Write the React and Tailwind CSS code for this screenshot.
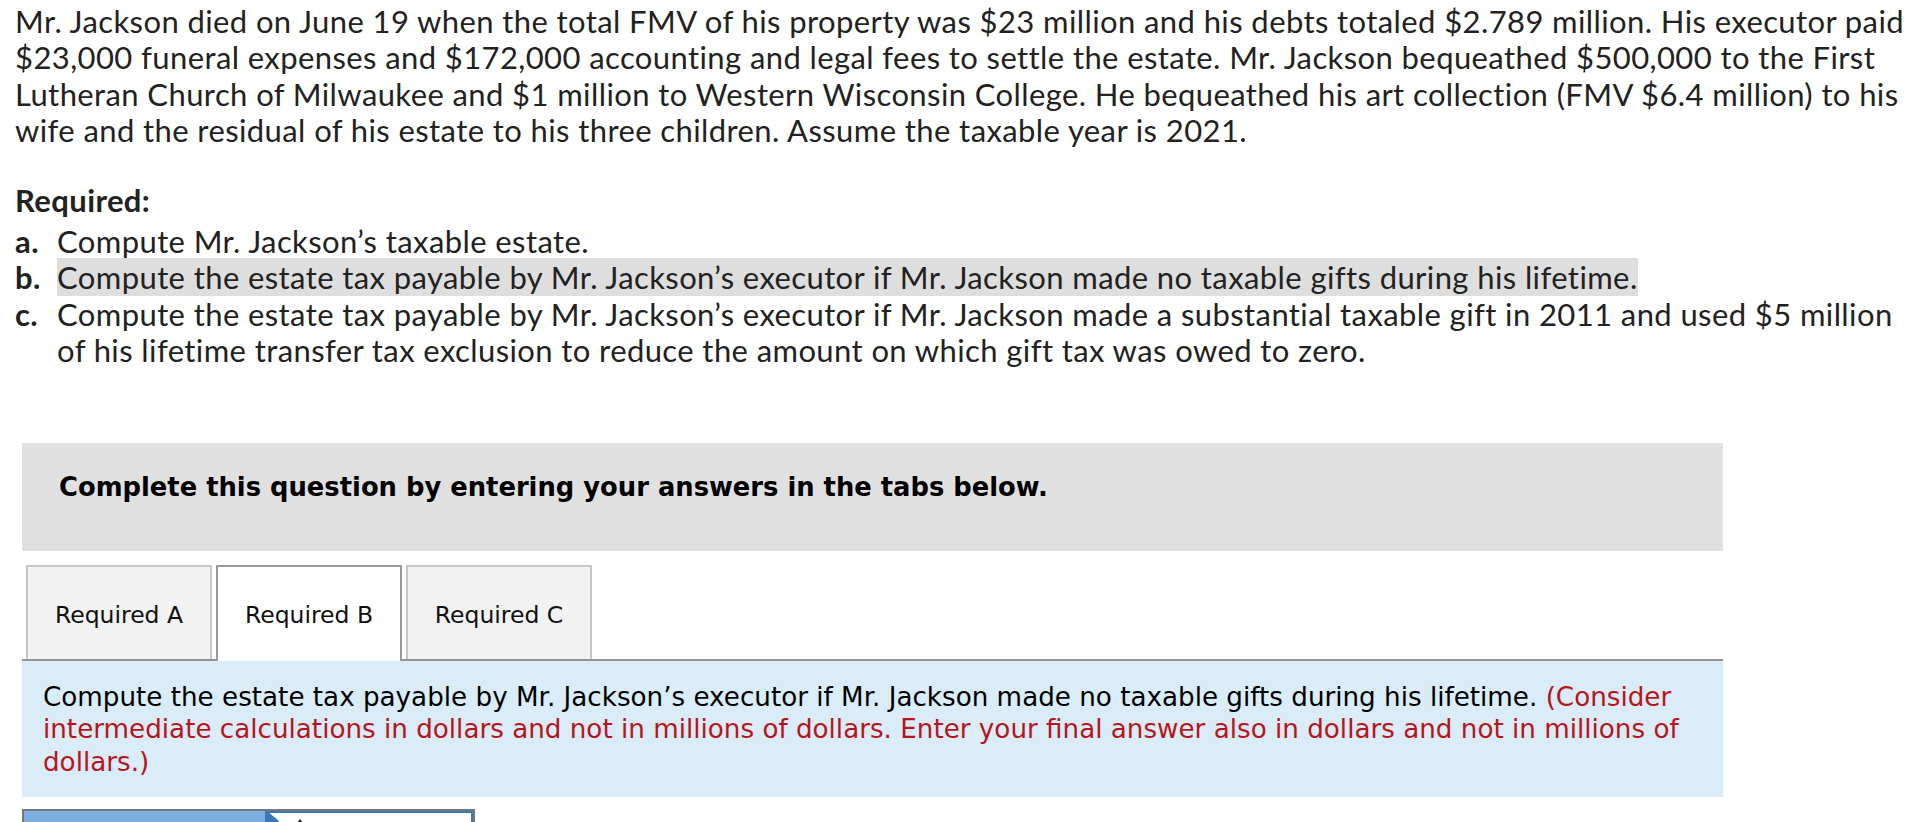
export default function App() {
  const para = [
    "Mr. Jackson died on June 19 when the total FMV of his property was $23 million and his debts totaled $2.789 million. His executor paid",
    "$23,000 funeral expenses and $172,000 accounting and legal fees to settle the estate. Mr. Jackson bequeathed $500,000 to the First",
    "Lutheran Church of Milwaukee and $1 million to Western Wisconsin College. He bequeathed his art collection (FMV $6.4 million) to his",
    "wife and the residual of his estate to his three children. Assume the taxable year is 2021.",
  ];
  return (
    <div className="w-[1916px] h-[822px] overflow-hidden bg-white">
      <div className="font-['Lato',sans-serif] text-[31px] tracking-[0.4px] leading-[36.4px] text-[#222] pl-[15px] pt-[3px]">
        {para.map((l, i) => (
          <div key={i} className="whitespace-nowrap">{l}</div>
        ))}
        <div className="mt-[33px] font-bold whitespace-nowrap">Required:</div>
        <div className="mt-[5px] grid grid-cols-[42px_auto] w-max">
          <div className="font-bold">a.</div>
          <div className="whitespace-nowrap">Compute Mr. Jackson’s taxable estate.</div>
          <div className="font-bold">b.</div>
          <div className="whitespace-nowrap">
            <span className="bg-[#dedede]">Compute the estate tax payable by Mr. Jackson’s executor if Mr. Jackson made no taxable gifts during his lifetime.</span>
          </div>
          <div className="font-bold">c.</div>
          <div className="whitespace-nowrap">
            Compute the estate tax payable by Mr. Jackson’s executor if Mr. Jackson made a substantial taxable gift in 2011 and used $5 million
            <br />
            of his lifetime transfer tax exclusion to reduce the amount on which gift tax was owed to zero.
          </div>
        </div>
      </div>

      <div className="font-['DejaVu_Sans','Verdana',sans-serif] ml-[22px] w-[1701px]">
        <div className="mt-[74px] h-[108px] bg-[#e0e0e0] pl-[37px] pt-[29px] text-[25.8px] leading-[30px] font-bold text-black whitespace-nowrap">
          Complete this question by entering your answers in the tabs below.
        </div>

        <div className="mt-[14px] h-[96px] flex items-end gap-[4px] pl-[4px] border-b-2 border-[#939393]">
          <div className="w-[186px] h-[94px] pt-[6px] border-2 border-b-0 border-[#c6c6c6] bg-[#f2f2f2] flex items-center justify-center text-[23.5px] text-[#111]">
            Required A
          </div>
          <div className="relative z-10 w-[186px] h-[96px] -mb-[2px] pt-[4px] border-2 border-b-0 border-[#999] bg-white flex items-center justify-center text-[23.5px] text-[#111]">
            Required B
          </div>
          <div className="w-[186px] h-[94px] pt-[6px] border-2 border-b-0 border-[#c6c6c6] bg-[#f2f2f2] flex items-center justify-center text-[23.5px] text-[#111]">
            Required C
          </div>
        </div>

        <div className="h-[136px] bg-[#d9ecf7] pl-[21px] pt-[20px] text-[26.2px] leading-[32.5px] text-black">
          <div className="whitespace-nowrap">
            Compute the estate tax payable by Mr. Jackson’s executor if Mr. Jackson made no taxable gifts during his lifetime.{" "}
            <span className="text-[#b8141c]">(Consider</span>
          </div>
          <div className="whitespace-nowrap text-[#b8141c]">
            intermediate calculations in dollars and not in millions of dollars. Enter your final answer also in dollars and not in millions of
          </div>
          <div className="whitespace-nowrap text-[#b8141c]">dollars.)</div>
        </div>

        <div className="mt-[12px] w-[453px] h-[60px] border-2 border-[#777] flex">
          <div className="w-[241px] bg-[#7aaee0]"></div>
          <div className="relative flex-1 border-2 border-[#3b78b5] bg-white">
            <svg className="absolute left-0 top-[-2px]" width="14" height="24" viewBox="0 0 14 24">
              <polygon points="0,0 12,10 0,20" fill="#3b78b5" />
            </svg>
            <div className="absolute left-[30px] top-[6px] w-0 h-0 border-l-[3px] border-r-[3px] border-b-[4px] border-l-transparent border-r-transparent border-b-[#222]"></div>
          </div>
        </div>
      </div>
    </div>
  );
}
